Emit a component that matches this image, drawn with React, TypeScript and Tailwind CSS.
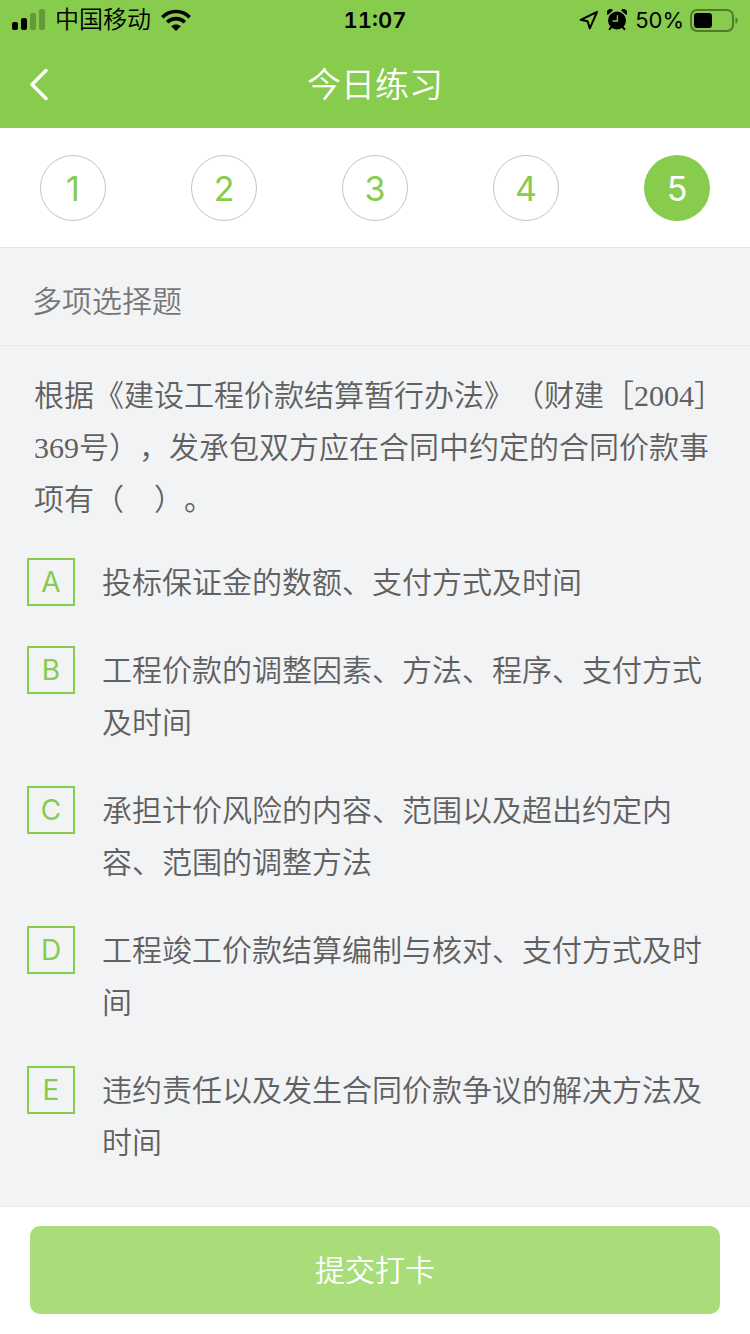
import { useState } from "react";


interface OptionProps {
    letter: string
    text: string
}

const questions = [1, 2, 3, 4, 5];

const options: OptionProps[] = [
    { letter: "A", text: "投标保证金的数额、支付方式及时间" },
    { letter: "B", text: "工程价款的调整因素、方法、程序、支付方式及时间" },
    { letter: "C", text: "承担计价风险的内容、范围以及超出约定内容、范围的调整方法" },
    { letter: "D", text: "工程竣工价款结算编制与核对、支付方式及时间" },
    { letter: "E", text: "违约责任以及发生合同价款争议的解决方法及时间" },
];

function SignalIcon() {
    return (
        <svg width="33" height="22" viewBox="0 0 33 22" aria-hidden="true">
            <rect x="0" y="13" width="6" height="8" rx="2" />
            <rect x="9" y="9" width="6" height="12" rx="2" />
            <rect x="18" y="4" width="6" height="17" rx="2" opacity="0.25" />
            <rect x="27" y="0" width="6" height="21" rx="2" opacity="0.25" />
        </svg>
    )
}

function WifiIcon() {
    return (
        <svg width="30" height="22" viewBox="0 0 30 22" aria-hidden="true">
            <g fill="none" stroke="currentColor" strokeWidth="3.6">
                <path d="M1.3 8.2C9 .6 21 .6 28.7 8.2" />
                <path d="M6.2 13.2C11.2 8.4 18.8 8.4 23.8 13.2" />
            </g>
            <path d="M10.2 17.2C13 14.9 17 14.9 19.8 17.2L15 22Z" />
        </svg>
    )
}

function LocationIcon() {
    return (
        <svg width="20" height="20" viewBox="0 0 20 20" fill="none" stroke="currentColor" strokeWidth="2" strokeLinejoin="round" aria-hidden="true">
            <path d="M18 2L1.6 9.8L8.6 11.2L10.8 18.4Z" />
        </svg>
    )
}

function AlarmIcon() {
    return (
        <svg width="20" height="22" viewBox="0 0 20 22" aria-hidden="true">
            <circle cx="10" cy="11.5" r="9" />
            <path d="M.8 6A3.4 3.4 0 0 1 6 1.2ZM19.2 6A3.4 3.4 0 0 0 14 1.2Z" />
            <path d="M4.5 18L2.6 20.2M15.5 18L17.4 20.2" stroke="currentColor" strokeWidth="2" strokeLinecap="round" />
            <path d="M10.4 6.2V12H5.6" fill="none" stroke="#87cc4c" strokeWidth="1.3" />
        </svg>
    )
}

function BatteryIcon() {
    return (
        <svg width="48" height="23" viewBox="0 0 48 23" aria-hidden="true">
            <rect x="1" y="1" width="42" height="21" rx="6" fill="none" stroke="currentColor" strokeWidth="2" opacity="0.4" />
            <rect x="4" y="4" width="18" height="15" rx="3" />
            <path d="M45.5 8C48.3 9.5 48.3 13.5 45.5 15Z" opacity="0.4" />
        </svg>
    )
}

function StatusBar() {
    return (
        <div className="grid h-10 grid-cols-[1fr_auto_1fr] items-center px-3 text-[22px] font-normal text-black">
            <div className="flex items-center gap-2.5">
                <SignalIcon />
                <span className="text-2xl font-[350]">中国移动</span>
                <WifiIcon />
            </div>
            <span className="font-semibold tabular-nums">11:07</span>
            <div className="flex items-center justify-end gap-2">
                <LocationIcon />
                <AlarmIcon />
                <div className="flex items-center gap-1.5">
                    <span>50%</span>
                    <BatteryIcon />
                </div>
            </div>
        </div>
    )
}

function Option({ letter, text }: OptionProps) {
    return (
        <label className="flex cursor-pointer items-start gap-[27px]">
            <input type="checkbox" className="peer sr-only" />
            <span className="mt-0.5 flex size-12 shrink-0 items-center justify-center border-2 border-[#87cc4c] text-[28px] font-normal text-[#87cc4c] peer-checked:bg-[#87cc4c] peer-checked:text-white">{letter}</span>
            <span className="text-3xl leading-[52px]">{text}</span>
        </label>
    )
}

export default function App() {
    const [current, setCurrent] = useState(5);

    return (
        <div className="flex min-h-screen flex-col bg-[#f2f3f5] font-[Inter,'Noto_Sans_CJK_SC',sans-serif] font-[350] text-[#606060] [text-spacing-trim:space-all]">
            <header className="bg-[#87cc4c] text-white">
                <StatusBar />
                <div className="grid h-22 grid-cols-[1fr_auto_1fr] items-center px-7">
                    <button type="button" aria-label="返回" className="w-fit">
                        <svg width="22" height="34" viewBox="0 0 22 34" fill="none" stroke="currentColor" strokeWidth="3.5" strokeLinecap="round" strokeLinejoin="round" aria-hidden="true">
                            <path d="M18 3.5L4 17.5L18 31.5" />
                        </svg>
                    </button>
                    <h1 className="text-[34px] font-[350]">今日练习</h1>
                </div>
            </header>

            <nav className="flex justify-between border-b border-[#e4e4e4] bg-white px-10 pt-[27px] pb-[26px]">
                {questions.map((n) => (
                    <button
                        key={n}
                        type="button"
                        onClick={() => setCurrent(n)}
                        className={n === current
                            ? "size-[66px] rounded-full bg-[#87cc4c] text-[34px] font-normal text-white"
                            : "size-[66px] rounded-full border border-[#c4c4c4] text-[34px] font-normal text-[#87cc4c]"}
                    >
                        {n}
                    </button>
                ))}
            </nav>

            <main className="flex-1">
                <h2 className="border-b border-[#e6e8ea] px-8 pt-[33px] pb-6 text-3xl leading-10 font-[350] text-[#777777]">多项选择题</h2>
                <p className="pt-6 pr-[26px] pl-[34px] font-['Liberation_Serif','Noto_Sans_CJK_SC',serif] text-3xl leading-[52px]">
                    根据《建设工程价款结算暂行办法》（财建［2004］369号），发承包双方应在合同中约定的合同价款事项有（　）。
                </p>
                <div className="flex flex-col gap-9 pt-[30px] pr-[26px] pb-9 pl-[27px]">
                    {options.map((o) => <Option key={o.letter} letter={o.letter} text={o.text} />)}
                </div>
            </main>

            <footer className="border-t border-[#e6e8ea] bg-white px-[30px] pt-[19px] pb-5">
                <button type="button" className="h-22 w-full rounded-[10px] bg-[#a9dd79] text-3xl text-white">提交打卡</button>
            </footer>
        </div>
    )
}
